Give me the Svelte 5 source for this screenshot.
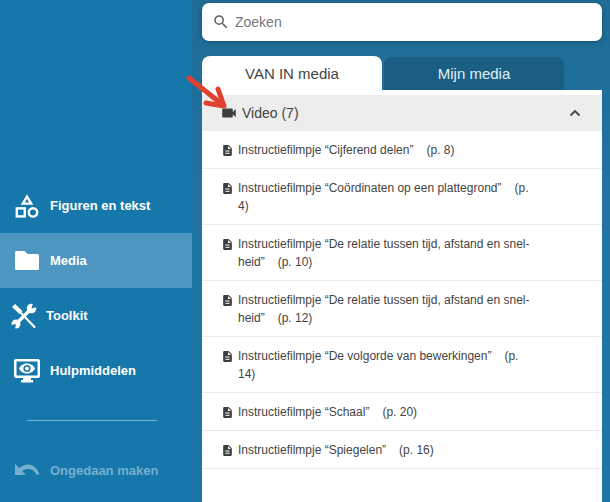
<script>
  const navItems = [
    { label: 'Figuren en tekst', icon: 'shapes' },
    { label: 'Media', icon: 'folder', active: true },
    { label: 'Toolkit', icon: 'tools' },
    { label: 'Hulpmiddelen', icon: 'monitor' }
  ];

  const videos = [
    { title: 'Instructiefilmpje “Cijferend delen”', page: 8 },
    { title: 'Instructiefilmpje “Coördinaten op een plattegrond”', page: 4 },
    { title: 'Instructiefilmpje “De relatie tussen tijd, afstand en snel-heid”', page: 10 },
    { title: 'Instructiefilmpje “De relatie tussen tijd, afstand en snel-heid”', page: 12 },
    { title: 'Instructiefilmpje “De volgorde van bewerkingen”', page: 14 },
    { title: 'Instructiefilmpje “Schaal”', page: 20 },
    { title: 'Instructiefilmpje “Spiegelen”', page: 16 }
  ];
</script>

<div class="app">
  <aside class="sidebar">
    <nav class="nav">
      {#each navItems as item}
        <div class="nav-item {item.icon}" class:active={item.active}>
          {#if item.icon === 'shapes'}
            <svg width="24" height="24" viewBox="0 0 24 24" fill="none" stroke="#fff" stroke-width="2.4">
              <path d="M12 2.500 7.800 9.600h8.400z" />
              <rect x="1.800" y="14.400" width="8" height="8" />
              <circle cx="18" cy="18.400" r="4.200" />
            </svg>
          {:else if item.icon === 'folder'}
            <svg width="26" height="22" viewBox="0 0 26 22" fill="#fff">
              <path d="M2.500 1h8l3 3h10A1.500 1.500 0 0 1 25 5.500V18.500A1.500 1.500 0 0 1 23.500 20h-21A1.500 1.500 0 0 1 1 18.500V2.500A1.500 1.500 0 0 1 2.500 1z" />
            </svg>
          {:else if item.icon === 'tools'}
            <svg width="26" height="26" viewBox="0 0 26 26">
              <path fill="#fff" d="M1 4 4 1l7.500 7-3 3z" />
              <path stroke="#fff" stroke-width="2.200" stroke-linecap="round" d="M9 9l14.500 15" />
              <path stroke="#fff" stroke-width="3.400" d="M5.500 20.500 20 6" />
              <circle cx="20.500" cy="5.500" r="4.800" fill="#fff" />
              <circle cx="5" cy="21" r="4.500" fill="#fff" />
              <path fill="#1577aa" d="M20.500 5.500 22 0h4v4z" />
              <path fill="#1577aa" d="M5 21 0 22v4h4z" />
            </svg>
          {:else if item.icon === 'monitor'}
            <svg width="28" height="25" viewBox="0 0 28 25">
              <path fill="#fff" fill-rule="evenodd" d="M3 1h22a2 2 0 0 1 2 2v15a2 2 0 0 1-2 2h-7v2h2v2.500H8V22h2v-2H3a2 2 0 0 1-2-2V3a2 2 0 0 1 2-2zm.500 2.500v14h21v-14z" />
              <path fill="#fff" d="M14 5.500c4 0 7 2.500 8 5-1 2.500-4 5-8 5s-7-2.500-8-5c1-2.500 4-5 8-5z" />
              <circle cx="14" cy="10.500" r="3.600" fill="#1577aa" />
              <circle cx="14" cy="10.500" r="2" fill="#fff" />
            </svg>
          {/if}
          <span>{item.label}</span>
        </div>
      {/each}
    </nav>

    <div class="divider"></div>

    <div class="undo">
      <svg width="26" height="14" viewBox="0 0 26 14" fill="#76afd0">
        <path d="M1 1v11h11L8 8c1.800-1.300 3.800-2 6-2 3.800 0 7 2.300 8.700 6l2.800-1C23.500 5.500 19 1.500 14 1.500 10.800 1.500 8 2.700 5.500 5z" />
      </svg>
      <span>Ongedaan maken</span>
    </div>
  </aside>

  <main class="main">
    <div class="search">
      <svg width="18" height="18" viewBox="0 0 24 24" fill="#5f5f5f">
        <path d="M15.500 14h-.79l-.28-.27A6.471 6.471 0 0 0 16 9.500 6.500 6.500 0 1 0 9.500 16c1.610 0 3.090-.59 4.230-1.570l.27.28v.79l5 4.990L20.490 19l-4.990-5zm-6 0C7.010 14 5 11.990 5 9.500S7.010 5 9.500 5 14 7.010 14 9.500 11.990 14 9.500 14z" />
      </svg>
      <span>Zoeken</span>
    </div>

    <div class="tabs">
      <div class="tab current">VAN IN media</div>
      <div class="tab other">Mijn media</div>
    </div>

    <section class="panel">
      <div class="group-head">
        <svg class="cam" width="18" height="18" viewBox="0 0 24 24" fill="#3d3d3d">
          <path d="M17 10.500V7c0-.55-.45-1-1-1H4c-.55 0-1 .45-1 1v10c0 .55.45 1 1 1h12c.55 0 1-.45 1-1v-3.500l4 4v-11l-4 4z" />
        </svg>
        <span class="group-title">Video (7)</span>
        <svg class="chevron" width="12" height="8" viewBox="0 0 12 8" fill="none" stroke="#444" stroke-width="1.800">
          <path d="M1.500 6.500 6 2l4.500 4.500" />
        </svg>
      </div>

      <ul class="list">
        {#each videos as video}
          <li>
            <svg width="13" height="13" viewBox="0 0 24 24" fill="#3d3d3d">
              <path d="M14 2H6c-1.100 0-2 .9-2 2v16c0 1.100.9 2 2 2h12c1.100 0 2-.9 2-2V8l-6-6zm2 16H8v-2h8v2zm0-4H8v-2h8v2zm-3-5V3.500L18.500 9H13z" />
            </svg>
            <p>{video.title}<span class="page"> (p. {video.page})</span></p>
          </li>
        {/each}
      </ul>
    </section>
  </main>

  <svg class="arrow" width="44" height="42" viewBox="0 0 44 42" fill="none" stroke="#e2412f" stroke-width="5" stroke-linecap="round" stroke-linejoin="round">
    <path d="M3 3 37 30" />
    <path d="M32 14 38 31 20 28" />
  </svg>
</div>

<style>
  :global(body) {
    margin: 0;
  }

  .app {
    position: relative;
    display: flex;
    width: 610px;
    height: 502px;
    overflow: hidden;
    font-family: "Liberation Sans", Arial, sans-serif;
  }

  .sidebar {
    width: 192px;
    flex: none;
    padding-top: 178px;
    box-sizing: border-box;
    background: #1577aa;
    color: #fff;
  }

  .nav-item {
    display: flex;
    align-items: center;
    gap: 11px;
    height: 55px;
    padding-left: 15px;
    font-size: 13px;
    font-weight: 700;
  }

  .nav-item.active {
    background: #4d96bf;
    padding-left: 14px;
    gap: 10px;
  }

  .nav-item.tools {
    padding-left: 11px;
    gap: 9px;
  }

  .nav-item.monitor {
    padding-left: 13px;
    gap: 9px;
  }

  .divider {
    width: 130px;
    height: 1px;
    margin: 22px 0 0 27px;
    background: #77b5da;
  }

  .undo {
    display: flex;
    align-items: center;
    gap: 10px;
    margin-top: 42px;
    padding-left: 14px;
    height: 14px;
    font-size: 13px;
    font-weight: 700;
    color: #76afd0;
  }

  .main {
    flex: 1;
    padding: 3px 8px 0 10px;
    background: linear-gradient(#1f6c94, #2073a4 40%, #1e75a8);
  }

  .search {
    display: flex;
    align-items: center;
    gap: 5px;
    height: 38px;
    padding-left: 10px;
    border-radius: 7px;
    background: #fff;
    box-shadow: 0 1px 5px rgba(0, 0, 0, 0.25);
    color: #777;
    font-size: 14px;
  }

  .tabs {
    display: flex;
    gap: 2px;
    margin-top: 15px;
    height: 34px;
  }

  .tab {
    display: flex;
    align-items: center;
    justify-content: center;
    width: 180px;
    border-radius: 8px 8px 0 0;
    font-size: 15px;
  }

  .tab.current {
    background: #fff;
    color: #444;
  }

  .tab.other {
    margin-top: 1px;
    background: #1b5e83;
    color: #e2f1f8;
  }

  .panel {
    height: 412px;
    padding-top: 5px;
    box-sizing: border-box;
    background: #fff;
  }

  .group-head {
    display: flex;
    align-items: center;
    height: 36px;
    padding: 0 21px 0 18px;
    background: #ededed;
    color: #444;
    font-size: 14px;
  }

  .group-title {
    margin-left: 4px;
  }

  .chevron {
    margin-left: auto;
  }

  .list {
    margin: 0;
    padding: 0;
    list-style: none;
  }

  .list li {
    display: flex;
    align-items: flex-start;
    gap: 4px;
    padding: 10px 40px 9px 19px;
    border-bottom: 1px solid #eaeaea;
    color: #444;
    font-size: 12px;
    line-height: 18px;
  }

  .list li svg {
    flex: none;
    margin-top: 3px;
  }

  .list p {
    margin: 0;
    width: 295px;
  }

  .page {
    padding-left: 13px;
  }

  .arrow {
    position: absolute;
    left: 186px;
    top: 75px;
  }
</style>
